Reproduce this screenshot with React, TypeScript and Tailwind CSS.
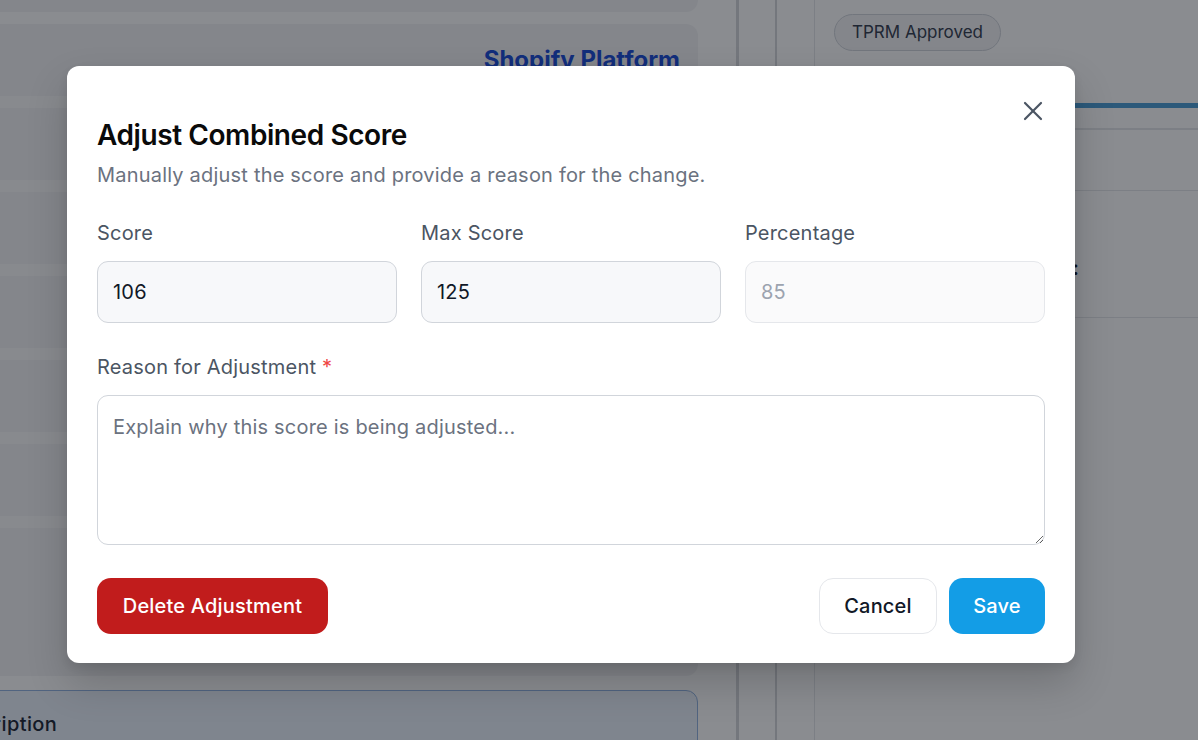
import React from "react";

const font = { fontFamily: "Inter, 'Noto Sans', 'Liberation Sans', sans-serif" };

function CloseIcon() {
  return (
    <svg width="20" height="20" viewBox="0 0 20 20" fill="none" stroke="#4b5563" strokeWidth="2.2" strokeLinecap="round">
      <path d="M2 2 18 18" />
      <path d="M18 2 2 18" />
    </svg>
  );
}

function Field({ label, value, muted }: { label: string; value: string; muted?: boolean }) {
  return (
    <div className="flex flex-1 flex-col">
      <label className="text-[20px] leading-[28px] tracking-[0.01em] text-[#4b5563]">{label}</label>
      <input
        readOnly
        value={value}
        className={
          muted
            ? "mt-[14px] h-[62px] w-full rounded-[11px] border border-[#e5e7eb] bg-[#fafafb] px-[15px] text-[20px] tracking-[0.01em] text-[#9ca3af] outline-none"
            : "mt-[14px] h-[62px] w-full rounded-[11px] border border-[#d1d5db] bg-[#f7f8fa] px-[15px] text-[20px] tracking-[0.01em] text-[#111827] outline-none"
        }
      />
    </div>
  );
}

function LeftColumn() {
  const rows = [0, 1, 2, 3, 4, 5];
  return (
    <div className="ml-[-80px] flex w-[778px] shrink-0 flex-col">
      <div className="mt-[-40px] h-[52px] shrink-0 rounded-xl bg-[#f3f4f6]" />
      <div className="mt-[12px] flex h-[652px] shrink-0 flex-col rounded-xl bg-[#f3f4f6]">
        <div className="flex h-[72px] shrink-0 items-center justify-end pr-[18px]">
          <span className="text-[24px] font-bold leading-[32px] text-[#1d4ed8]">Shopify Platform</span>
        </div>
        {rows.map((r) => (
          <div key={r} className="flex shrink-0 flex-col">
            <div className="h-[12px] bg-[#fbfbfc]" />
            <div className="h-[72px]" />
          </div>
        ))}
      </div>
      <div className="mt-[14px] h-[120px] shrink-0 rounded-xl border border-[#93b4e0] bg-[#eaf1fb] pl-[22px] pt-[19px]">
        <span className="text-[20px] font-medium leading-[28px] tracking-[0.02em] text-[#1f2937]">Description</span>
      </div>
    </div>
  );
}

function RightPanel() {
  return (
    <div className="flex flex-1 flex-col border-l border-[#e5e7eb] pl-[19px]">
      <div className="mt-[14px] flex">
        <span className="flex h-[37px] items-center rounded-full border border-[#d1d5db] bg-[#f3f4f6] px-[17px] text-[17px] text-[#374151]">
          TPRM Approved
        </span>
      </div>
      <div className="mt-[52px] h-[5px] bg-[#4f9fd6]" />
      <div className="mt-[20px] h-[2px] bg-[#e5e7eb]" />
      <div className="h-[60px]" />
      <div className="h-px bg-[#e5e7eb]" />
      <div className="flex h-[126px] items-start pt-[63px]">
        <span className="w-[245px] text-right text-[20px] font-semibold leading-[28px] text-[#111827]">Combined Score:</span>
      </div>
      <div className="h-px bg-[#e5e7eb]" />
    </div>
  );
}

export default function App() {
  return (
    <div className="relative h-[740px] w-[1198px] overflow-hidden bg-white" style={font}>
      {/* page underneath */}
      <div className="flex h-full">
        <LeftColumn />
        <div className="w-[38px] shrink-0" />
        <div className="w-[3px] shrink-0 bg-[#d5d8dc]" />
        <div className="w-[36px] shrink-0" />
        <div className="w-[2px] shrink-0 bg-[#d5d8dc]" />
        <div className="w-[37px] shrink-0" />
        <RightPanel />
      </div>

      {/* dialog */}
      <div className="absolute inset-0 bg-[rgba(6,10,19,0.47)]">
        <div className="relative ml-[67px] mt-[66px] flex w-[1008px] flex-col rounded-[12px] bg-white px-[30px] pb-[29px] pt-[51px] shadow-[0_20px_40px_rgba(0,0,0,0.18),0_4px_10px_rgba(0,0,0,0.08)]">
          <button className="absolute right-[32px] top-[35px] flex h-[20px] w-[20px] items-center justify-center">
            <CloseIcon />
          </button>
          <h2 className="text-[28px] font-semibold leading-[36px] tracking-[-0.015em] text-[#0a0a0a]">Adjust Combined Score</h2>
          <p className="mt-[8px] text-[20px] leading-[28px] tracking-[0.01em] text-[#6b7280]">
            Manually adjust the score and provide a reason for the change.
          </p>

          <div className="mt-[30px] flex gap-[24px]">
            <Field label="Score" value="106" />
            <Field label="Max Score" value="125" />
            <Field label="Percentage" value="85" muted />
          </div>

          <label className="mt-[30px] text-[20px] leading-[28px] tracking-[0.01em] text-[#4b5563]">
            Reason for Adjustment <span className="text-[#ef4444]">*</span>
          </label>
          <textarea
            placeholder="Explain why this score is being adjusted..."
            className="mt-[14px] h-[150px] w-full rounded-[11px] border border-[#d1d5db] bg-white px-[15px] pt-[17px] text-[20px] leading-[28px] tracking-[0.01em] text-[#111827] outline-none placeholder:text-[#6b7280]"
          />

          <div className="mt-[33px] flex items-center">
            <button className="flex h-[56px] w-[231px] items-center justify-center rounded-[14px] bg-[#c11c1c] text-[20px] font-medium tracking-[0.01em] text-white">
              Delete Adjustment
            </button>
            <div className="flex-1" />
            <button className="flex h-[56px] w-[118px] items-center justify-center rounded-[14px] border border-[#e5e7eb] bg-white text-[20px] font-medium tracking-[0.01em] text-[#111827]">
              Cancel
            </button>
            <button className="ml-[12px] flex h-[56px] w-[96px] items-center justify-center rounded-[14px] bg-[#139de6] text-[20px] font-medium tracking-[0.01em] text-white">
              Save
            </button>
          </div>
        </div>
      </div>
    </div>
  );
}
